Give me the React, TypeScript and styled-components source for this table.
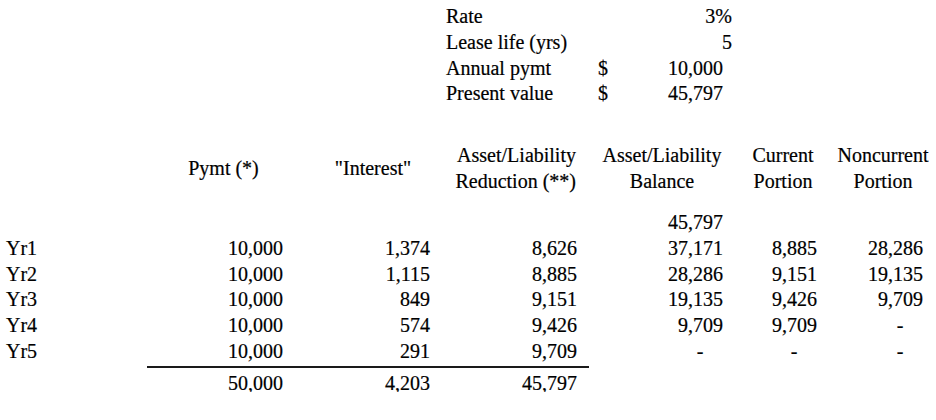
import React from "react";
import styled, { createGlobalStyle } from "styled-components";

const GlobalStyle = createGlobalStyle`
  html, body {
    margin: 0;
    padding: 0;
    background: #ffffff;
  }
`;

const COLS = "147px 148px 147px 147px 146px 94px 106px";
const ROW_H = 25.8;

const Sheet = styled.div`
  width: 936px;
  padding-top: 2px;
  display: flex;
  flex-direction: column;
  font-family: "Liberation Serif", "Times New Roman", Tinos, serif;
  font-size: 20px;
  color: #000000;
  -webkit-text-stroke: 0.2px #000000;
`;

const Section = styled.div<{ $gap?: number }>`
  display: flex;
  flex-direction: column;
  margin-top: ${(p) => p.$gap ?? 0}px;
`;

const Row = styled.div<{ $gap?: number }>`
  display: grid;
  grid-template-columns: ${COLS};
  height: ${ROW_H}px;
  line-height: ${ROW_H}px;
  margin-top: ${(p) => p.$gap ?? 0}px;
  white-space: nowrap;
`;

const HeaderRow = styled.div<{ $gap?: number }>`
  display: grid;
  grid-template-columns: ${COLS};
  height: ${ROW_H * 2}px;
  align-items: center;
  line-height: ${ROW_H}px;
  margin-top: ${(p) => p.$gap ?? 0}px;
`;

const Cell = styled.div<{ $ruled?: boolean }>`
  min-width: 0;
  box-sizing: border-box;
  border-top: ${(p) => (p.$ruled ? "2px solid #1a1a1a" : "2px solid transparent")};
  padding-top: ${(p) => (p.$ruled ? 3 : 0)}px;
`;

const Label = styled(Cell)<{ $indent?: number }>`
  text-align: left;
  padding-left: ${(p) => p.$indent ?? 6}px;
`;

const Num = styled(Cell)`
  text-align: right;
  padding-right: 12px;
`;

const Dash = styled(Cell)`
  text-align: right;
  padding-right: 31.5px;
`;

const General = styled(Cell)`
  text-align: right;
  padding-right: 3px;
`;

const Money = styled(Cell)`
  display: flex;
  justify-content: space-between;
  padding-left: 9px;
  padding-right: 12px;
`;

const Head = styled.div<{ $align?: "center" | "right"; $shift?: number; $trail?: number }>`
  text-align: ${(p) => p.$align ?? "center"};
  padding-left: ${(p) => p.$shift ?? 0}px;
  padding-right: ${(p) => p.$trail ?? 0}px;
  white-space: nowrap;
`;

const Line = styled.div`
  display: block;
`;

type Val = string | null;

const summary: { label: string; value: string; general?: boolean }[] = [
  { label: "Rate", value: "3%", general: true },
  { label: "Lease life (yrs)", value: "5", general: true },
  { label: "Annual pymt", value: "10,000" },
  { label: "Present value", value: "45,797" },
];

const schedule: { label: string; cells: Val[] }[] = [
  { label: "", cells: [null, null, null, "45,797", null, null] },
  { label: "Yr1", cells: ["10,000", "1,374", "8,626", "37,171", "8,885", "28,286"] },
  { label: "Yr2", cells: ["10,000", "1,115", "8,885", "28,286", "9,151", "19,135"] },
  { label: "Yr3", cells: ["10,000", "849", "9,151", "19,135", "9,426", "9,709"] },
  { label: "Yr4", cells: ["10,000", "574", "9,426", "9,709", "9,709", "-"] },
  { label: "Yr5", cells: ["10,000", "291", "9,709", "-", "-", "-"] },
];

const totals = ["50,000", "4,203", "45,797"];

function ValueCell({ v }: { v: Val }) {
  if (v === null) return <Cell />;
  if (v === "-") return <Dash>-</Dash>;
  return <Num>{v}</Num>;
}

export default function App() {
  return (
    <>
      <GlobalStyle />
      <Sheet>
        <Section>
          {summary.map((s) => (
            <Row key={s.label}>
              <Cell />
              <Cell />
              <Cell />
              <Label $indent={4}>{s.label}</Label>
              {s.general ? (
                <General>{s.value}</General>
              ) : (
                <Money>
                  <span>$</span>
                  <span>{s.value}</span>
                </Money>
              )}
              <Cell />
              <Cell />
            </Row>
          ))}
        </Section>

        <HeaderRow $gap={38.3}>
          <div />
          <Head $shift={5}>Pymt (*)</Head>
          <Head $shift={9}>"Interest"</Head>
          <Head $align="right" $trail={13}>
            <Line>Asset/Liability</Line>
            <Line>Reduction (**)</Line>
          </Head>
          <Head>
            <Line>Asset/Liability</Line>
            <Line>Balance</Line>
          </Head>
          <Head $shift={2}>
            <Line>Current</Line>
            <Line>Portion</Line>
          </Head>
          <Head $shift={2}>
            <Line>Noncurrent</Line>
            <Line>Portion</Line>
          </Head>
        </HeaderRow>

        <Section $gap={12.9}>
          {schedule.map((r, i) => (
            <Row key={i}>
              <Label>{r.label}</Label>
              {r.cells.map((c, j) => (
                <ValueCell key={j} v={c} />
              ))}
            </Row>
          ))}
          <Row $gap={3}>
            <Cell />
            {totals.map((t, j) => (
              <Num key={j} $ruled>
                {t}
              </Num>
            ))}
            <Cell />
            <Cell />
            <Cell />
          </Row>
        </Section>
      </Sheet>
    </>
  );
}
